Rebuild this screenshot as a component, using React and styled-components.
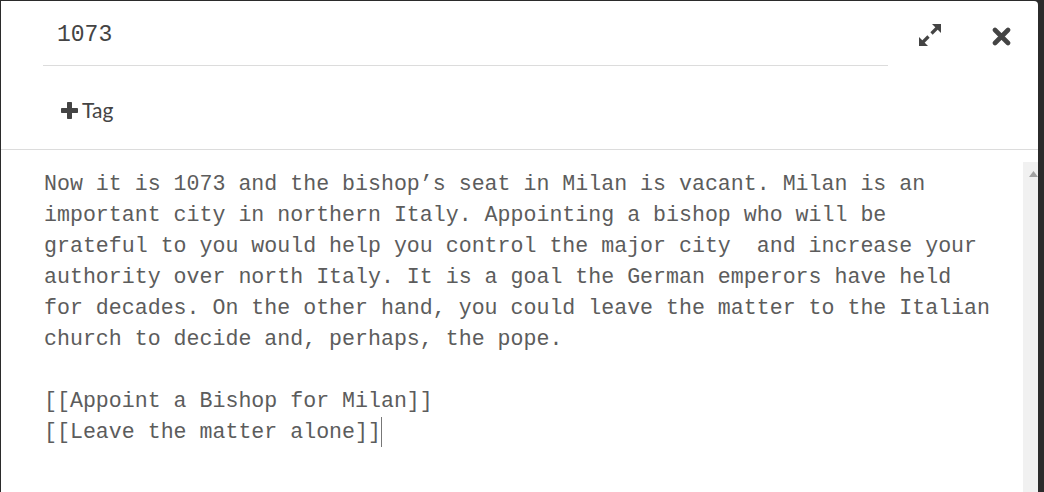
import React from "react";
import styled, { createGlobalStyle } from "styled-components";

const Global = createGlobalStyle`
  html, body { margin: 0; padding: 0; height: 100%; overflow: hidden; background: #2b2b2b; }
  #root { height: 100%; }
`;

const Page = styled.div`
  height: 100%;
  box-sizing: border-box;
  padding: 1px 6px 0 1px;
  display: flex;
`;

const Dialog = styled.div`
  flex: 1;
  background: #fff;
  border-top-right-radius: 4px;
  display: flex;
  flex-direction: column;
  overflow: hidden;
`;

const Header = styled.div`
  display: flex;
  flex-direction: column;
  border-bottom: 1px solid #dcdcdc;
`;

const TitleRow = styled.div`
  display: flex;
  align-items: flex-start;
  padding-left: 42px;
`;

const TitleInput = styled.div`
  width: 845px;
  height: 65px;
  box-sizing: border-box;
  border-bottom: 1px solid #dcdcdc;
  padding: 4px 0 0 14px;
  display: flex;
  align-items: center;
  font-family: "Liberation Mono", monospace;
  font-size: 23px;
  color: #444;
`;

const IconButton = styled.div`
  display: flex;
  align-items: center;
  justify-content: center;
  margin-left: ${(p) => p.$gap}px;
  padding-top: ${(p) => p.$top}px;
  color: #444;
`;

const TagRow = styled.div`
  height: 83px;
  box-sizing: border-box;
  padding: 5px 0 0 60px;
  display: flex;
  align-items: center;
  gap: 4px;
`;

const TagLabel = styled.span`
  font-family: Lato, "Open Sans", sans-serif;
  font-size: 21px;
  color: #444;
  line-height: 1;
  padding-bottom: 2px;
`;

const Body = styled.div`
  flex: 1;
  display: flex;
  padding-top: 12px;
`;

const Editor = styled.div`
  flex: 1;
  padding: 7px 0 0 43px;
  font-family: "Liberation Mono", monospace;
  font-size: 21.6px;
  line-height: 31px;
  color: #5c5c5c;
  white-space: pre;
`;

const Caret = styled.span`
  display: inline-block;
  width: 1px;
  height: 30px;
  background: #777;
  vertical-align: top;
`;

const Scrollbar = styled.div`
  width: 15px;
  background: #f1f1f1;
  display: flex;
  flex-direction: column;
  align-items: flex-end;
  padding-top: 9px;
`;

const ExpandIcon = () => (
  <svg width="24" height="24" viewBox="0 0 24 24" fill="currentColor">
    <polygon points="14,1 23,1 23,10" />
    <line x1="19" y1="5" x2="13.5" y2="10.5" stroke="currentColor" strokeWidth="3.2" />
    <polygon points="1,14 1,23 10,23" />
    <line x1="5" y1="19" x2="10.5" y2="13.5" stroke="currentColor" strokeWidth="3.2" />
  </svg>
);

const CloseIcon = () => (
  <svg width="19" height="19" viewBox="0 0 19 19">
    <path d="M3 3 L16 16 M16 3 L3 16" stroke="currentColor" strokeWidth="4.6" strokeLinecap="round" />
  </svg>
);

const PlusIcon = () => (
  <svg width="17" height="17" viewBox="0 0 17 17" fill="#444">
    <rect x="6" y="0" width="5" height="17" rx="0.8" />
    <rect x="0" y="6" width="17" height="5" rx="0.8" />
  </svg>
);

const UpArrow = () => (
  <svg width="9" height="6" viewBox="0 0 9 6" fill="#a3a3a3">
    <polygon points="4.5,0 9,6 0,6" />
  </svg>
);

const text = `Now it is 1073 and the bishop’s seat in Milan is vacant. Milan is an
important city in northern Italy. Appointing a bishop who will be
grateful to you would help you control the major city  and increase your
authority over north Italy. It is a goal the German emperors have held
for decades. On the other hand, you could leave the matter to the Italian
church to decide and, perhaps, the pope.

[[Appoint a Bishop for Milan]]
[[Leave the matter alone]]`;

export default function App() {
  return (
    <>
      <Global />
      <Page>
        <Dialog>
          <Header>
            <TitleRow>
              <TitleInput>1073</TitleInput>
              <IconButton $gap={30} $top={22}>
                <ExpandIcon />
              </IconButton>
              <IconButton $gap={50} $top={26}>
                <CloseIcon />
              </IconButton>
            </TitleRow>
            <TagRow>
              <PlusIcon />
              <TagLabel>Tag</TagLabel>
            </TagRow>
          </Header>
          <Body>
            <Editor>
              {text}
              <Caret />
            </Editor>
            <Scrollbar>
              <UpArrow />
            </Scrollbar>
          </Body>
        </Dialog>
      </Page>
    </>
  );
}
